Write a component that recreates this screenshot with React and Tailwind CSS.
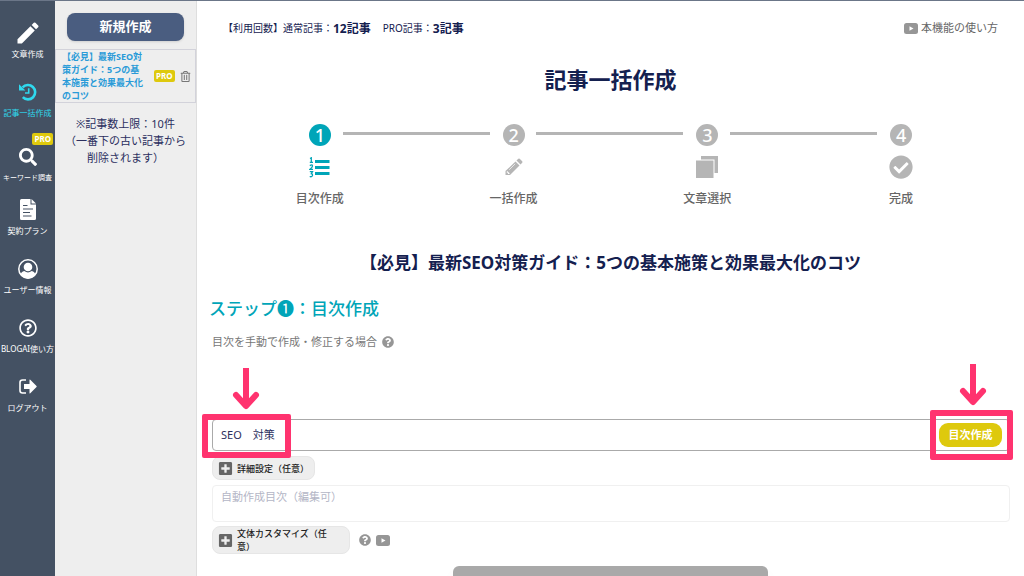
import React from 'react'
import {
  FaSearch,
  FaRegQuestionCircle,
  FaCheckCircle,
  FaQuestionCircle,
  FaPlusSquare,
  FaRegTrashAlt
} from 'react-icons/fa'
import { MdEdit } from 'react-icons/md'

const HistoryIcon = () => (
  <svg width="18" height="18" viewBox="0 0 18 18" fill="none" stroke="currentColor" aria-hidden="true">
    <path d="M3.600 4.400A7.200 7.200 0 1 1 3.800 14.200" strokeWidth="2.600" />
    <path d="M0 1.200V7.400H6.400Z" fill="currentColor" stroke="none" />
    <path d="M9.700 5.200V10H6" strokeWidth="1.600" />
  </svg>
)

const FileIcon = () => (
  <svg width="16" height="21" viewBox="0 0 16 21" fill="currentColor" aria-hidden="true">
    <path
      fillRule="evenodd"
      d="M1.500 0H10.500V5.500H16V19.500Q16 21 14.500 21H1.500Q0 21 0 19.500V1.500Q0 0 1.500 0ZM3 6V7H7.500V6ZM3 9.500V10.500H13V9.500ZM3 13V14H10V13ZM3 16.500V17.500H11.500V16.500Z"
    />
    <path d="M11.500 0L16 4.500H11.500Z" />
  </svg>
)

const UserIcon = () => (
  <svg width="20" height="20" viewBox="0 0 20 20" aria-hidden="true">
    <circle cx="10" cy="10" r="9.200" fill="none" stroke="currentColor" strokeWidth="1.500" />
    <circle cx="10" cy="8" r="4.300" fill="currentColor" />
    <path d="M6.300 12Q3.200 12.600 2.700 15.800Q5.500 19.400 10 19.400Q14.500 19.400 17.300 15.800Q16.800 12.600 13.700 12Q10 14.900 6.300 12Z" fill="currentColor" />
  </svg>
)

const LogoutIcon = () => (
  <svg width="18" height="15" viewBox="0 0 18 15" aria-hidden="true">
    <path d="M7 1H3.500Q1 1 1 3.500V11.500Q1 14 3.500 14H7" fill="none" stroke="currentColor" strokeWidth="1.600" />
    <path d="M5 5H10.500V1Q10.500 0 11.300 0.800L17.500 6.900Q18 7.500 17.500 8.100L11.300 14.200Q10.500 15 10.500 14V10H5Z" fill="currentColor" />
  </svg>
)

const ListIcon = () => (
  <svg width="21" height="21" viewBox="0 0 21 21" aria-hidden="true">
    <path d="M6 4.500H20.500M6 10.500H20.500M6 16.500H20.500" stroke="currentColor" strokeWidth="3" />
    <path
      d="M1 1.500L2.300 0.800V5M0.800 5.300H4M0.800 8.600Q3.500 7 3.500 9Q3.400 10.300 1 12.300H4M0.800 14.700H3.500L2.300 16.700Q3.800 17 3.400 18.700Q2.600 20.200 0.700 19.500"
      fill="none"
      stroke="currentColor"
      strokeWidth="1.300"
    />
  </svg>
)

const PencilIcon = () => (
  <svg width="18" height="18" viewBox="0 0 18 18" aria-hidden="true">
    <path d="M10.500 3.500L14.500 7.500L5 17H0.500V13Z" fill="currentColor" />
    <path d="M11.500 2.500L13.300 0.800Q14 0.200 14.700 0.800L17.200 3.300Q17.800 4 17.200 4.700L15.500 6.500Z" fill="currentColor" />
    <path d="M10.200 5.800L4.200 11.800" stroke="#fff" strokeWidth="0.700" />
    <path d="M2.200 13L4.800 15.600L4.200 16H2.900V14.800H1.800V13.600Z" fill="#fff" />
  </svg>
)

const CloneIcon = () => (
  <svg width="22" height="22" viewBox="0 0 22 22" fill="currentColor" aria-hidden="true">
    <path d="M5 0H22V17H18.500V3.500H5Z" />
    <path d="M0 4.500H17.500V22H0Z" />
  </svg>
)

const VideoIcon = () => (
  <svg className="shrink-0" width="14" height="11" viewBox="0 0 14 11" aria-hidden="true">
    <rect width="14" height="11" rx="2.500" fill="#969696" />
    <path d="M5.500 3.200L9.500 5.500L5.500 7.800Z" fill="#fff" />
  </svg>
)

const navItems = [
  { label: '文章作成', icon: <MdEdit size={28} /> },
  { label: '記事一括作成', icon: <HistoryIcon />, active: true },
  { label: 'キーワード調査', icon: <FaSearch size={18} />, pro: true, small: true },
  { label: '契約プラン', icon: <FileIcon /> },
  { label: 'ユーザー情報', icon: <UserIcon /> },
  { label: 'BLOGAI使い方', icon: <FaRegQuestionCircle size={18} /> },
  { label: 'ログアウト', icon: <LogoutIcon /> }
]

const steps = [
  { number: 1, label: '目次作成', icon: <ListIcon />, active: true },
  { number: 2, label: '一括作成', icon: <PencilIcon /> },
  { number: 3, label: '文章選択', icon: <CloneIcon /> },
  { number: 4, label: '完成', icon: <FaCheckCircle size={24} /> }
]

const ProBadge = () => (
  <span className="flex h-3 shrink-0 items-center rounded-xs bg-[#dec90d] px-[2px] text-[8px] font-bold text-white">
    PRO
  </span>
)

// Flecha rosa que señala el campo resaltado
const Arrow = ({ className }) => (
  <svg className={className} width="28" height="44" viewBox="0 0 28 44" fill="none" stroke="#ff336f" aria-hidden="true">
    <path d="M14 1V36" strokeWidth="6" />
    <path d="M4 28L14 39L24 28" strokeWidth="6" strokeLinecap="round" strokeLinejoin="round" />
  </svg>
)

const Sidebar = () => (
  <nav className="w-[55px] shrink-0 bg-[#445163] pt-[10px] text-white">
    {navItems.map(item => (
      <a
        key={item.label}
        href="#"
        className={`flex h-[59px] flex-col items-center justify-center ${item.active ? 'text-[#2fd9ee]' : ''}`}
      >
        {item.pro && (
          <span className="mr-[2px] self-end">
            <ProBadge />
          </span>
        )}
        <span className="flex h-6 items-center">{item.icon}</span>
        <span className={`mt-[2px] whitespace-nowrap leading-[14px] ${item.small ? 'text-[7px]' : 'text-[8px]'}`}>
          {item.label}
        </span>
      </a>
    ))}
  </nav>
)

const HistoryPanel = () => (
  <aside className="w-[142px] shrink-0 border-r border-[#dedede] bg-[#eee]">
    <div className="px-3 pt-3 pb-2">
      <button className="h-7 w-full rounded-lg bg-[#4a5d80] text-[13px] font-bold text-white shadow-sm">新規作成</button>
    </div>
    <div className="flex items-center border border-[#d2d2da] pr-1 pl-[6px]">
      <a href="#" className="w-[84px] shrink-0 text-[9px] leading-[13px] font-bold text-[#2a9bd8]">
        【必見】最新SEO対策ガイド：5つの基本施策と効果最大化のコツ
      </a>
      <span className="ml-2">
        <ProBadge />
      </span>
      <button aria-label="削除" className="ml-[5px] text-[#777]">
        <FaRegTrashAlt size={11} />
      </button>
    </div>
    <p className="mt-3 text-center text-[11px] leading-[17px] text-[#2b2f5e]">
      ※記事数上限：10件
      <br />
      （一番下の古い記事から
      <br />
      削除されます）
    </p>
  </aside>
)

const Stepper = () => (
  <ol className="mt-7 grid grid-cols-4 px-[26px]">
    {steps.map((step, index) => (
      <li
        key={step.number}
        className={`relative flex flex-col items-center ${step.active ? 'text-[#00a5b8]' : 'text-[#b5b5b5]'}`}
      >
        {index > 0 && <span className="absolute top-2 right-1/2 mr-6 h-[3px] w-[147px] bg-[#b5b5b5]" />}
        <span
          className={`flex size-[22px] items-center justify-center rounded-full text-[18px] leading-[22px] font-medium text-white ${
            step.active ? 'bg-[#00a5b8]' : 'bg-[#b5b5b5]'
          }`}
        >
          {step.number}
        </span>
        <span className="mt-[9px] flex h-6 items-center">{step.icon}</span>
        <span className="mt-3 text-[12px] leading-4 font-medium text-[#666]">{step.label}</span>
      </li>
    ))}
  </ol>
)

const OptionButton = ({ children, className }) => (
  <button
    className={`flex items-center gap-1 rounded-lg border border-[#e6e6e6] bg-[#eee] pl-[5px] text-left text-[9px] leading-[13px] font-medium text-[#222] ${className}`}
  >
    <FaPlusSquare size={15} className="shrink-0 text-[#666]" />
    <span>{children}</span>
  </button>
)

const OutlineForm = () => (
  <form className="mt-[69px] mr-[14px] ml-[15px]" onSubmit={e => e.preventDefault()}>
    <div className="relative flex h-8 items-center rounded-sm border border-[#aaa] pr-[7px] pl-2">
      <input
        aria-label="キーワード"
        defaultValue="SEO　対策"
        className="min-w-0 flex-1 bg-transparent text-[11px] text-[#2b2f5e] outline-none"
      />
      <button className="h-6 w-[63px] rounded-[9px] bg-[#dec90d] text-[11px] font-bold text-white">目次作成</button>

      <span className="absolute -top-[6px] -left-[11px] h-11 w-[89px] rounded-xs border-6 border-[#ff336f]" />
      <Arrow className="absolute -top-[53px] left-[19px]" />
      <span className="absolute -top-[10px] -right-1 h-[50px] w-[83px] rounded-xs border-6 border-[#ff336f]" />
      <Arrow className="absolute -top-[57px] right-[22px]" />
    </div>

    <OptionButton className="mt-[5px] h-6 w-[103px]">詳細設定（任意）</OptionButton>
    <textarea
      aria-label="自動作成目次"
      placeholder="自動作成目次（編集可）"
      className="mt-[5px] block h-[37px] w-full resize-none rounded-sm border border-[#f0f0f0] px-2 pt-[3px] text-[11px] leading-4 placeholder:text-[#b4b6c6]"
    />
    <div className="mt-1 flex items-center">
      <OptionButton className="h-7 w-[138px] pr-3">文体カスタマイズ（任意）</OptionButton>
      <FaQuestionCircle size={12} className="ml-[9px] text-[#969696]" />
      <span className="ml-[5px]">
        <VideoIcon />
      </span>
    </div>
  </form>
)

const App = () => (
  <div
    lang="ja"
    className="flex h-screen overflow-hidden border-t border-[#6b7688] bg-white font-['Noto_Sans','Noto_Sans_CJK_JP',sans-serif]"
  >
    <Sidebar />
    <HistoryPanel />
    <main className="min-w-0 flex-1">
      <header className="flex h-[55px] items-center justify-between pr-[26px] pl-[26px]">
        <p className="flex items-center text-[10px] text-[#14204f]">
          【利用回数】通常記事：<b className="text-[12px]">12記事</b>
          <span className="ml-3">PRO記事：</span>
          <b className="text-[12px]">3記事</b>
        </p>
        <a href="#" className="flex items-center gap-[3px] text-[11px] text-[#666]">
          <VideoIcon />
          本機能の使い方
        </a>
      </header>

      <h1 className="mt-[6px] text-center text-[22px] leading-[34px] font-bold text-[#14204f]">記事一括作成</h1>
      <Stepper />

      <h2 className="mt-[43px] text-center text-[17px] leading-[26px] font-bold text-[#14204f]">
        【必見】最新SEO対策ガイド：5つの基本施策と効果最大化のコツ
      </h2>
      <h3 className="mt-5 ml-3 text-[17px] leading-[26px] font-medium text-[#00a5b8]">ステップ❶：目次作成</h3>
      <p className="mt-[12px] ml-[15px] flex items-center gap-[5px] text-[11px] leading-4 text-[#777]">
        目次を手動で作成・修正する場合
        <FaQuestionCircle size={12} className="text-[#969696]" />
      </p>

      <OutlineForm />

      <button
        aria-label="次へ"
        className="mx-auto mt-3 block h-8 w-[38%] rounded-md bg-[#a9a9a9] shadow-lg"
      />
    </main>
  </div>
)

export default App
